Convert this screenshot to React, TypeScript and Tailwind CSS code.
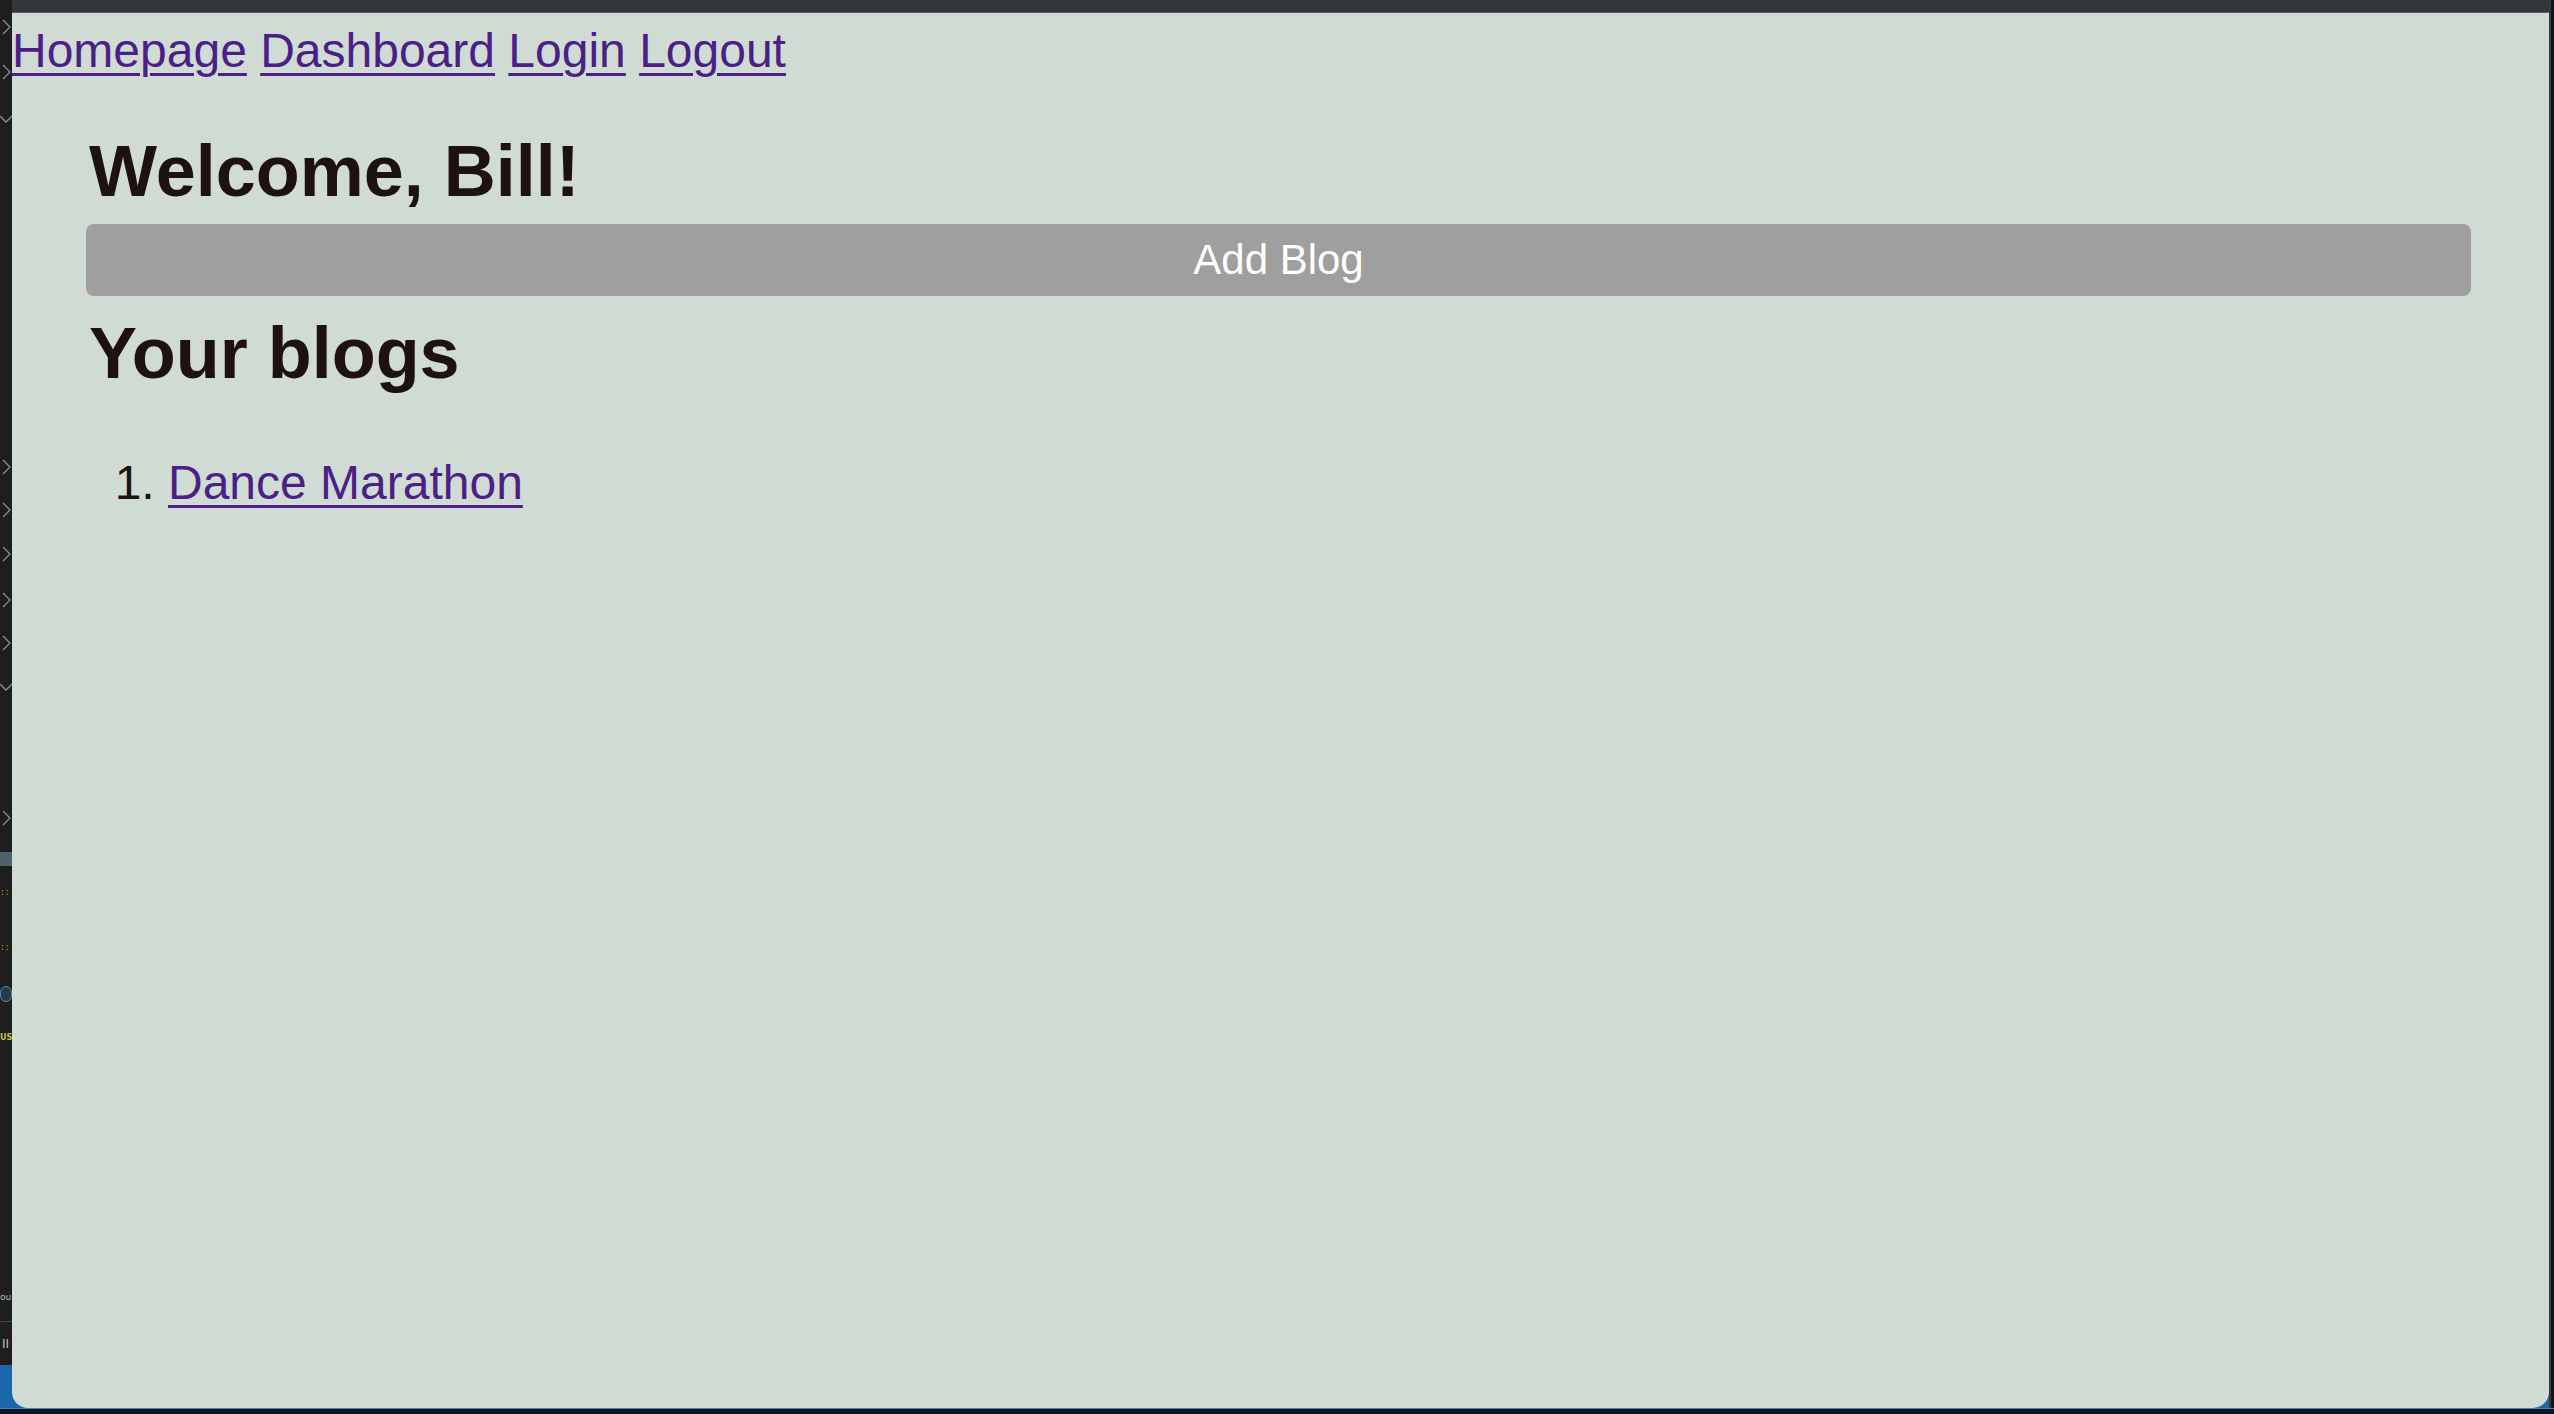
import React from 'react';

const links = ['Homepage', 'Dashboard', 'Login', 'Logout'];
const blogs = [{ id: 1, title: 'Dance Marathon' }];

// bits of the editor peeking out behind the browser window
const chevrons = [
  { top: 18, down: false },
  { top: 63, down: false },
  { top: 110, down: true },
  { top: 458, down: false },
  { top: 501, down: false },
  { top: 545, down: false },
  { top: 591, down: false },
  { top: 634, down: false },
  { top: 678, down: true },
  { top: 809, down: false },
];

const Chevron = ({ down }: { down: boolean }) => (
  <svg width="12" height="18" viewBox="0 0 12 18" fill="none" stroke="#8e8e8e" strokeWidth="1.3">
    {down ? <polyline points="0,6 6,12 12,6" /> : <polyline points="3,2 10,9 3,16" />}
  </svg>
);

const EditorStrip = () => (
  <div className="relative w-[12px] h-full bg-[#1e1e1e] overflow-hidden shrink-0">
    {chevrons.map((c) => (
      <div key={c.top} className="absolute left-0" style={{ top: c.top }}>
        <Chevron down={c.down} />
      </div>
    ))}
    <div className="absolute left-0 top-[852px] w-[12px] h-[14px] bg-[#4d636c]" />
    <div className="absolute left-0 top-[889px] text-[8px] leading-none text-[#b8b23a] font-['DejaVu_Sans_Mono',monospace]">::</div>
    <div className="absolute left-0 top-[944px] text-[8px] leading-none text-[#b8b23a] font-['DejaVu_Sans_Mono',monospace]">::</div>
    <div className="absolute left-0 top-[986px] w-[12px] h-[16px] bg-[#2b3a44] rounded-full border border-[#3e8fc0]" />
    <div className="absolute left-0 top-[1034px] text-[8px] font-bold leading-none text-[#c8c23a] font-['DejaVu_Sans',sans-serif]">US</div>
    <div className="absolute left-0 top-[1293px] text-[9px] leading-none text-[#bdbdbd] font-['DejaVu_Sans',sans-serif]">ou</div>
    <div className="absolute left-0 top-[1321px] w-[12px] h-px bg-[#444]" />
    <div className="absolute left-[2px] top-[1338px] text-[12px] leading-none text-[#bdbdbd] font-['DejaVu_Sans',sans-serif]">II</div>
    <div className="absolute left-0 bottom-0 w-[12px] h-[43px] bg-[#1b67aa]" />
  </div>
);

export default function App() {
  return (
    <div className="w-[2554px] h-[1414px] flex flex-col bg-[#0c1620] overflow-hidden font-['Liberation_Sans',Arial,sans-serif]">
      <div className="flex h-[1408px]">
        <EditorStrip />

        {/* browser window */}
        <div className="flex-1 flex flex-col bg-[#1b67aa]">
          <div className="h-[12px] bg-[#35363a]" />
          <div className="h-px bg-[#5b5c60]" />
          <div className="flex-1 bg-[#cfdbd3] rounded-b-[16px]">
            <nav className="pt-[10px] text-[48px] leading-[55px] text-[#4b1e88]">
              {links.map((l, i) => (
                <React.Fragment key={l}>
                  <a href="#" className="underline decoration-[3px] underline-offset-[6px]">
                    {l}
                  </a>
                  {i < links.length - 1 && ' '}
                </React.Fragment>
              ))}
            </nav>

            <main className="pl-[74px] pr-[78px] text-[#1e1111]">
              <h1 className="mt-[52px] mb-[11px] pl-[3px] text-[72px] leading-[83px] font-bold">Welcome, Bill!</h1>
              <button className="w-full h-[72px] rounded-[8px] bg-[#9f9f9f] text-white text-[42px] leading-[48px] flex items-center justify-center">
                Add Blog
              </button>
              <h2 className="mt-[16px] pl-[3px] text-[72px] leading-[83px] font-bold">Your blogs</h2>
              <ol className="mt-[60px] pl-[82px] list-decimal text-[48px] leading-[55px]">
                {blogs.map((b) => (
                  <li key={b.id}>
                    <a href="#" className="text-[#4b1e88] underline decoration-[3px] underline-offset-[6px]">
                      {b.title}
                    </a>
                  </li>
                ))}
              </ol>
            </main>
          </div>
        </div>

        <div className="w-[5px] h-full flex flex-col shrink-0">
          <div className="w-[2px] flex-1 bg-[#3a3a3a]" />
        </div>
      </div>
      <div className="h-px bg-[#3f86c4]" />
      <div className="flex-1 bg-[#0c1620]" />
    </div>
  );
}
